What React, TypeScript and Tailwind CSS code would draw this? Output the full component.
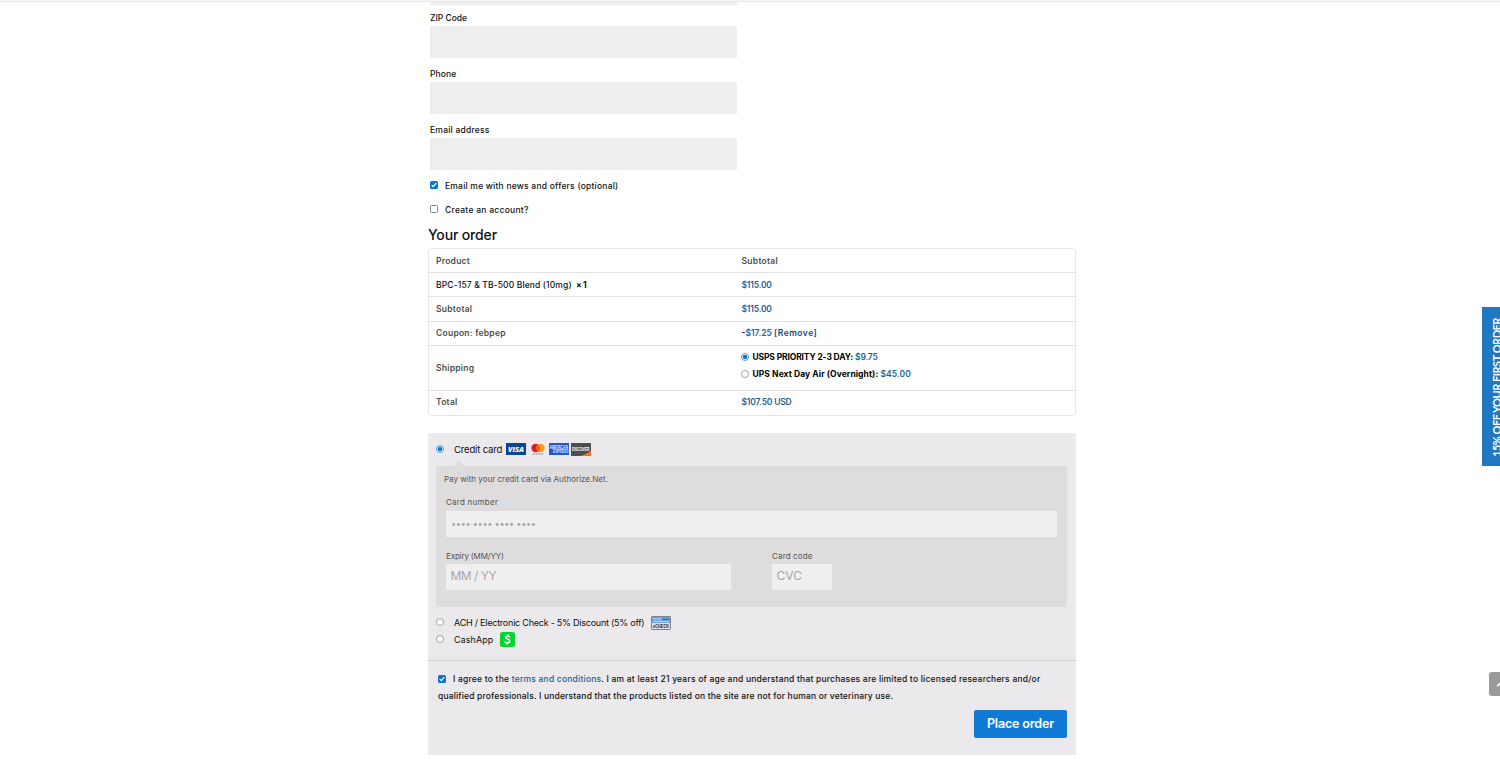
import type { ReactNode } from "react";
import { FaChevronUp } from "react-icons/fa";

function Checkbox({ checked = false }: { checked?: boolean }) {
  return (
    <span
      className={
        checked
          ? "flex w-2 h-2 mb-[2px] shrink-0 items-center justify-center rounded-[1.5px] bg-[#0d76d1]"
          : "flex w-2 h-2 mb-[2px] shrink-0 rounded-[1.5px] border border-[#858585] bg-white"
      }
    >
      {checked && (
        <svg viewBox="0 0 8 8" className="w-2 h-2" fill="none">
          <path d="M1.7 4.1L3.3 5.7L6.3 2.2" stroke="#fff" strokeWidth="1.2" />
        </svg>
      )}
    </span>
  );
}

function Radio({ checked = false }: { checked?: boolean }) {
  return (
    <svg viewBox="0 0 8 8" className="w-2 h-2 mb-[2px] shrink-0">
      <circle
        cx="4"
        cy="4"
        r="3.5"
        fill="#fff"
        stroke={checked ? "#2a86d8" : "#8a8a8a"}
        strokeWidth="0.8"
      />
      {checked && <circle cx="4" cy="4" r="2.3" fill="#0d76d1" />}
    </svg>
  );
}

function Field({ label, className }: { label: string; className: string }) {
  return (
    <div className="h-14">
      <div className="h-4 leading-[17px] whitespace-nowrap">
        <span className={className}>{label}</span>
      </div>
      <div className="w-[307px] h-8 bg-[#eeeeee]" />
    </div>
  );
}

function Row({
  name,
  className,
  children,
}: {
  name: ReactNode;
  className: string;
  children: ReactNode;
}) {
  return (
    <div className={"flex items-center whitespace-nowrap " + className}>
      <div className="w-[305.5px] pl-[7px] shrink-0 font-semibold tracking-[0.25px] text-[#4d4d4d]">
        {name}
      </div>
      <div className="pl-[7px] font-semibold tracking-[-0.18px] text-[#1d5f94]">{children}</div>
    </div>
  );
}

function Cards() {
  return (
    <div className="flex h-[13px] items-start">
      <svg viewBox="0 0 20 12" className="w-5 h-3">
        <rect width="20" height="12" rx="0.6" fill="#0b4595" />
        <text
          x="10"
          y="8.7"
          textAnchor="middle"
          fontFamily="Open Sans, sans-serif"
          fontSize="7.2"
          fontWeight="800"
          fontStyle="italic"
          fill="#fff"
          textLength="16"
          lengthAdjust="spacingAndGlyphs"
        >
          VISA
        </text>
      </svg>
      <svg viewBox="0 0 20 12" className="w-5 h-3 ml-[1.5px]">
        <circle cx="7.6" cy="5" r="4.2" fill="#e9142b" />
        <circle cx="12.4" cy="5" r="4.2" fill="#f79a1d" />
        <path d="M10 1.6a4.2 4.2 0 0 1 0 6.8a4.2 4.2 0 0 1 0-6.8z" fill="#ff5f00" />
        <path d="M4.5 10.9h11" stroke="#77727a" strokeWidth="0.8" strokeDasharray="1.3 0.3" />
      </svg>
      <svg viewBox="0 0 20 12" className="w-5 h-3 ml-[1.5px]">
        <rect width="20" height="12" rx="0.5" fill="#2557d0" />
        <g
          fill="#dfe8ff"
          fontFamily="Liberation Sans, sans-serif"
          fontSize="4.8"
          fontWeight="700"
        >
          <text x="0.5" y="5.8" textLength="18.5" lengthAdjust="spacingAndGlyphs">
            AMERICAN
          </text>
          <text x="4" y="10.2" textLength="15.5" lengthAdjust="spacingAndGlyphs">
            EXPRESS
          </text>
        </g>
      </svg>
      <svg viewBox="0 0 20 13" className="w-5 h-[13px] ml-[2px]">
        <rect width="20" height="13" rx="0.7" fill="#4d4d4d" />
        <path d="M20 7.5v4.8a.7.7 0 0 1-.7.7H8C12.5 12.3 16.5 10.500 20 7.5z" fill="#f47216" />
        <text
          x="1"
          y="7.6"
          fontFamily="Liberation Sans, sans-serif"
          fontSize="5"
          fontWeight="700"
          fill="#fff"
          textLength="17.5"
          lengthAdjust="spacingAndGlyphs"
        >
          DISCOVER
        </text>
      </svg>
    </div>
  );
}

function CheckIcon() {
  return (
    <svg viewBox="0 0 20 14" className="w-5 h-[14px]">
      <rect x="0.5" y="0.5" width="19" height="13" rx="0.6" fill="#dfe3ea" stroke="#7d8088" />
      <rect x="1" y="1" width="18" height="6" fill="#6f9fe2" />
      <path d="M2 3h9M2 5.5h16" stroke="#c4dcfb" strokeWidth="0.9" />
      <path d="M11 3.3h7" stroke="#336cc0" strokeWidth="1.2" />
      <text
        x="2"
        y="12.3"
        fontFamily="Liberation Sans, sans-serif"
        fontSize="5"
        fontWeight="700"
        fill="#26282c"
        textLength="16"
        lengthAdjust="spacingAndGlyphs"
      >
        eCHECK
      </text>
    </svg>
  );
}

function CashAppIcon() {
  return (
    <svg viewBox="0 0 15 15" className="w-[15px] h-[15px]">
      <rect width="15" height="15" rx="2.5" fill="#00d632" />
      <path
        d="M10 5.2C9.3 4.5 8.4 4.2 7.6 4.2C6.5 4.2 5.7 4.7 5.7 5.5C5.7 7.5 9.8 6.6 9.8 9C9.8 10.1 8.8 10.8 7.4 10.8C6.3 10.8 5.3 10.4 4.7 9.7M8.3 2.5L8 4.2M7 10.8L6.7 12.5"
        fill="none"
        stroke="#fff"
        strokeWidth="1.5"
      />
    </svg>
  );
}

function PaymentBox() {
  return (
    <div className="relative w-[631px] h-[141px] bg-[#dfdcde] pt-[7px] text-[8px] font-normal text-[#555355]">
      <svg viewBox="0 0 12 6" className="absolute left-[17px] -top-[5px] w-3 h-[6px]">
        <path d="M0 6L6 0L12 6z" fill="#dfdcde" />
      </svg>
      <div className="pl-2 h-3 leading-3">Pay with your credit card via Authorize.Net.</div>
      <div className="pl-[10px]">
        <div className="mt-[11px] h-[15px] leading-3 tracking-[0.25px]">Card number</div>
        <div className="flex items-center w-[611px] h-[26px] pb-px pl-[5px] bg-[#efefef] text-[9.2px] tracking-[-0.3px] text-[#aaa6a8]">
          •••• •••• •••• ••••
        </div>
        <div className="flex mt-[13px]">
          <div className="w-[326px]">
            <div className="h-[14px] leading-3 tracking-[-0.15px]">Expiry (MM/YY)</div>
            <div className="flex items-center w-[285px] h-[26px] pb-[2px] pl-[4.5px] bg-[#efefef] text-[12px] tracking-[-0.5px] text-[#aaa6a8]">
              MM / YY
            </div>
          </div>
          <div>
            <div className="h-[14px] leading-3 tracking-[0.15px]">Card code</div>
            <div className="flex items-center w-[60px] h-[26px] pb-[2px] pl-[4.5px] bg-[#efefef] text-[12px] text-[#aaa6a8]">
              CVC
            </div>
          </div>
        </div>
      </div>
    </div>
  );
}

function Payment() {
  return (
    <div className="mt-[17px] w-[648px] h-[322px] rounded-t-[3px] bg-[#ebe9eb] whitespace-nowrap">
      <div className="flex items-center h-[33px] pl-2 text-[9.5px] font-normal">
        <Radio checked />
        <span className="ml-[10px] w-[52px] pt-[2px] tracking-[-0.15px]">Credit card</span>
        <Cards />
      </div>
      <div className="pl-2">
        <PaymentBox />
      </div>
      <div className="h-[54px] pl-2 pt-[7px] border-b border-[#d2cfd2] text-[9px] font-normal">
        <div className="flex items-center h-[17px]">
          <Radio />
          <span className="ml-[10px] w-[197px] tracking-[-0.23px]">
            ACH / Electronic Check - 5% Discount (5% off)
          </span>
          <CheckIcon />
        </div>
        <div className="flex items-center h-[17px]">
          <Radio />
          <span className="ml-[10px] w-[46px] tracking-[0.05px]">CashApp</span>
          <CashAppIcon />
        </div>
      </div>
      <div className="pl-[10px] pt-[10px] leading-[17px]">
        <div className="flex items-center h-[17px]">
          <Checkbox checked />
          <span className="ml-[7px] tracking-[0.21px]">
            I agree to the <span className="text-[#1d5f94]">terms and conditions</span>. I am at
            least 21 years of age and understand that purchases are limited to licensed
            researchers and/or
          </span>
        </div>
        <div className="tracking-[0.17px]">
          qualified professionals. I understand that the products listed on the site are not for
          human or veterinary use.
        </div>
      </div>
      <button className="block ml-[546px] mt-[5px] w-[93px] h-7 rounded-[2px] bg-[#117ad5] text-white text-[12.5px] font-semibold tracking-[-0.15px]">
        Place order
      </button>
    </div>
  );
}

export default function App() {
  return (
    <div className="relative w-full h-[763px] overflow-hidden bg-white font-['Inter',sans-serif] text-[8.5px] font-medium text-[#111]">
      <div className="h-px bg-[#f4f4f4]" />
      <div className="h-px bg-[#e8e8e8]" />
      <div className="ml-[428px] w-[648px]">
        <div className="pl-[2px]">
          <div className="w-[307px] h-[3px] mb-[5px] bg-[#eeeeee]" />
          <Field label="ZIP Code" className="" />
          <Field label="Phone" className="tracking-[0.1px]" />
          <Field label="Email address" className="tracking-[0.23px]" />
          <div className="flex items-center h-6 gap-[7px] -mt-[4px] tracking-[0.22px]">
            <Checkbox checked />
            <span>Email me with news and offers (optional)</span>
          </div>
          <div className="flex items-center h-6 gap-[7px] tracking-[0.27px]">
            <Checkbox />
            <span>Create an account?</span>
          </div>
        </div>
        <div className="h-[26px] leading-[26px] text-[14px] tracking-[-0.15px]">Your order</div>
        <div className="w-[648px] border border-[#e6e6e6] rounded-[3px] divide-y divide-[#e2e2e2]">
          <Row name="Product" className="h-6 pt-px">
            <span className="tracking-[0.28px] text-[#4d4d4d]">Subtotal</span>
          </Row>
          <Row
            name={
              <span className="font-medium tracking-[0.13px] text-[#111]">
                BPC-157 &amp; TB-500 Blend (10mg){" "}
                <b className="ml-[2px] font-bold tracking-[-0.4px]">× 1</b>
              </span>
            }
            className="h-6 pt-px"
          >
            $115.00
          </Row>
          <Row name="Subtotal" className="h-[25px]">
            $115.00
          </Row>
          <Row name="Coupon: febpep" className="h-6">
            <span className="tracking-normal">
              <span className="text-[#111]">-</span>$17.25{" "}
              <span className="tracking-[0.5px] text-[#124a7c]">[Remove]</span>
            </span>
          </Row>
          <Row name="Shipping" className="h-[45px]">
            <div className="flex items-center gap-[3.5px] h-[17px] -ml-[0.5px] tracking-[-0.14px]">
              <Radio checked />
              <span>
                <span className="text-black font-bold">USPS PRIORITY 2-3 DAY:</span> $9.75
              </span>
            </div>
            <div className="flex items-center gap-[3.5px] h-[17px] mb-[4px] -ml-[0.5px] tracking-[0.07px]">
              <Radio />
              <span>
                <span className="text-black font-bold">UPS Next Day Air (Overnight):</span> $45.00
              </span>
            </div>
          </Row>
          <Row name="Total" className="h-6 pb-px">
            $107.50 USD
          </Row>
        </div>
        <Payment />
      </div>
      <div className="absolute left-[1482px] top-[307px] w-[30px] h-[159px] bg-[#2079c0]">
        <div className="absolute left-[7px] top-[9px] h-[141px] w-4 leading-4 rotate-180 [writing-mode:vertical-rl] whitespace-nowrap font-['Lato',sans-serif] text-[11px] tracking-[-0.48px] font-bold text-white">
          15% OFF YOUR FIRST ORDER
        </div>
      </div>
      <div className="absolute left-[1489px] top-[672px] flex items-center w-6 h-6 pl-[7px] rounded-[3px] bg-[#999]">
        <FaChevronUp className="w-[10px] h-[10px] text-white" />
      </div>
    </div>
  );
}
